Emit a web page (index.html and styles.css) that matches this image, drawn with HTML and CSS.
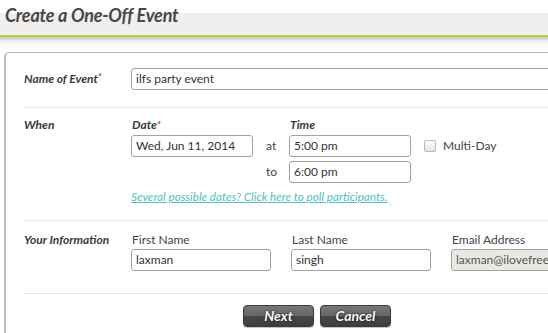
FILE: index.html
```html
<!DOCTYPE html>
<html lang="en">
<head>
    <meta charset="UTF-8">
    <title>Create a One-Off Event</title>
    <link rel="stylesheet" href="styles.css">
</head>
<body>
    <header class="page-head">
        <h1 class="page-title">Create a One-Off Event</h1>
    </header>
    <main class="panel">
        <section class="row row-name">
            <div class="row-label">Name of Event<span class="req">*</span></div>
            <div class="row-body">
                <input class="field field-wide" type="text" value="ilfs party event" readonly>
            </div>
        </section>
        <section class="row row-when">
            <div class="row-label">When</div>
            <div class="row-body when-grid">
                <div class="sub-label">Date<span class="req">*</span></div>
                <div></div>
                <div class="sub-label">Time</div>
                <div></div>
                <input class="field" type="text" value="Wed, Jun 11, 2014" readonly>
                <span class="joiner">at</span>
                <input class="field" type="text" value="5:00 pm" readonly>
                <label class="multi"><span class="check"></span>Multi-Day</label>
                <div></div>
                <span class="joiner">to</span>
                <input class="field" type="text" value="6:00 pm" readonly>
                <div></div>
                <a class="poll-link" href="#">Several possible dates? Click here to poll participants.</a>
            </div>
        </section>
        <section class="row row-info">
            <div class="row-label">Your Information</div>
            <div class="row-body info-grid">
                <div class="plain-label">First Name</div>
                <div class="plain-label">Last Name</div>
                <div class="plain-label">Email Address</div>
                <input class="field" type="text" value="laxman" readonly>
                <input class="field" type="text" value="singh" readonly>
                <input class="field field-locked" type="text" value="laxman@ilovefreesoftware.com" readonly>
            </div>
        </section>
        <div class="actions">
            <button class="btn">Next</button>
            <button class="btn">Cancel</button>
        </div>
    </main>
</body>
</html>
```

FILE: styles.css
```css
:root {
    --text-color: #333;
    --line-color: #e6e6e6;
    --field-border: #a3a3a3;
    --accent-green: #b9cd3f;
    --link-color: #4fbfbd;
}
body {
    font-family: 'Lato', 'Liberation Sans', sans-serif;
    margin: 0;
    padding: 0;
    color: var(--text-color);
    background: #fff;
    overflow: hidden;
    width: 548px;
    height: 333px;
}
.page-head {
    height: 52px;
    background: linear-gradient(to bottom,
        #fff 0, #fff 13px,
        #f0efee 13px, #f0efee 35px,
        var(--accent-green) 35px, var(--accent-green) 37px,
        #c4c4c4 37px, #ececec 41px, #f8f8f8 44px, #fff 52px);
}
.page-title {
    margin: 0;
    padding: 4px 0 0 5px;
    font-size: 18px;
    line-height: 22px;
    font-style: italic;
    font-weight: 700;
    color: #474747;
    letter-spacing: -0.2px;
}
.panel {
    margin-left: 4px;
    width: 622px;
    border: 1px solid #b8b8b8;
    border-left: 2px solid #bdbdbd;
    border-radius: 5px 0 0 0;
    padding: 0 0 40px 0;
}
.row {
    display: flex;
    margin: 0 0 0 18px;
    border-bottom: 1px solid var(--line-color);
}
.row-label {
    width: 107px;
    flex-shrink: 0;
    font-size: 12px;
    font-weight: 700;
    font-style: italic;
    color: #3a3a3a;
}
.req {
    color: #e0283a;
    font-size: 10px;
    vertical-align: top;
    position: relative;
    top: -1px;
}
.row-name {
    padding: 14px 0 17px;
}
.row-name .row-label {
    padding-top: 4px;
}
.row-when {
    padding: 10px 0 17px;
}
.row-info {
    padding: 12px 0 22px;
}
.field {
    box-sizing: border-box;
    height: 22px;
    padding: 0 4px;
    border: 1px solid var(--field-border);
    border-radius: 3px;
    font-family: 'Lato', 'Liberation Sans', sans-serif;
    font-size: 12px;
    color: #333;
    background: #fff;
    outline: none;
    width: 100%;
}
.field-wide {
    width: 440px;
}
.field-locked {
    background: #e9e9e4;
    color: #555;
}
.when-grid {
    display: grid;
    grid-template-columns: 122px 36px 122px 150px;
    align-items: center;
}
.when-grid .field:nth-of-type(3) {
    margin-top: 4px;
}
.sub-label {
    font-size: 12px;
    font-weight: 700;
    font-style: italic;
    color: #3a3a3a;
    line-height: 14px;
    padding: 0 0 3px 1px;
}
.row-when .row-label {
    line-height: 14px;
}
.joiner {
    font-size: 12px;
    color: #444;
    padding-left: 13px;
}
.when-grid .joiner:nth-of-type(2) {
    margin-top: 4px;
}
.multi {
    display: flex;
    align-items: center;
    font-size: 12px;
    color: #444;
    padding-left: 13px;
}
.check {
    width: 10px;
    height: 10px;
    border: 1px solid #b9b9b9;
    border-radius: 2px;
    background: linear-gradient(to bottom, #fdfdfd, #e4e4e4);
    margin-right: 7px;
}
.poll-link {
    grid-column: 1 / 5;
    margin-top: 6px;
    font-size: 11.7px;
    font-style: italic;
    color: var(--link-color);
    line-height: 14px;
}
.info-grid {
    display: grid;
    grid-template-columns: 140px 140px 140px;
    column-gap: 20px;
}
.plain-label {
    font-size: 12px;
    color: #444;
    line-height: 14px;
    padding: 0 0 2px 1px;
}
.row-info .row-label {
    line-height: 14px;
}
.actions {
    display: flex;
    justify-content: center;
    gap: 6px;
    padding-top: 11px;
}
.btn {
    width: 71px;
    height: 22px;
    border: 1px solid #3a3a3a;
    border-radius: 4px;
    background: linear-gradient(to bottom, #777 0, #666 50%, #474747 50%, #3d3d3d 100%);
    box-shadow: 0 1px 1px rgba(0, 0, 0, 0.25);
    color: #fff;
    font-family: 'Lato', 'Liberation Sans', sans-serif;
    font-size: 14px;
    font-style: italic;
    font-weight: 700;
    text-shadow: 0 0 2px #000;
    padding: 0;
}
```
